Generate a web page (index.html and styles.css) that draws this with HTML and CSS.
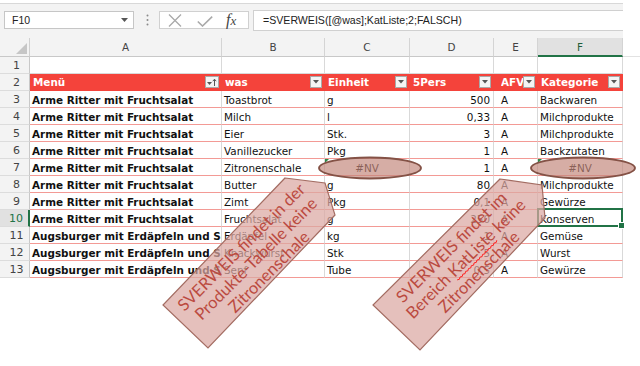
FILE: index.html
```html
<!DOCTYPE html>
<html lang="de">
<head>
<meta charset="utf-8">
<title>SVERWEIS</title>
<link rel="stylesheet" href="styles.css">
</head>
<body>
<div class="app">
  <div class="fbar">
    <div class="namebox"><span class="nb-text">F10</span><svg class="nb-arrow" width="7" height="4" viewBox="0 0 7 4"><polygon points="0,0 7,0 3.5,4" fill="#555"/></svg></div>
    <svg class="grip" width="3" height="12" viewBox="0 0 3 12"><circle cx="1.5" cy="1.5" r="1" fill="#8a8a8a"/><circle cx="1.5" cy="6" r="1" fill="#8a8a8a"/><circle cx="1.5" cy="10.5" r="1" fill="#8a8a8a"/></svg>
    <div class="btns">
      <svg class="ico-x" width="14" height="13" viewBox="0 0 14 13"><path d="M1 0.5 L13 12.5 M13 0.5 L1 12.5" stroke="#a9a9a9" stroke-width="1.3" fill="none"/></svg>
      <svg class="ico-ok" width="16" height="11" viewBox="0 0 16 11"><path d="M0.8 5.5 L5.5 10 L15.2 0.6" stroke="#a9a9a9" stroke-width="1.6" fill="none"/></svg>
      <span class="fx">f<span class="fx-x">x</span></span>
    </div>
    <div class="formula">=SVERWEIS([@was];KatListe;2;FALSCH)</div>
  </div>

  <div class="sheet">
    <div class="r hdr">
      <div class="corner"><svg width="11" height="11" viewBox="0 0 11 11"><polygon points="11,0 11,11 0,11" fill="#c6c6c6"/></svg></div>
      <div class="ch">A</div><div class="ch">B</div><div class="ch">C</div><div class="ch">D</div><div class="ch">E</div><div class="ch chsel">F</div><div class="ch chrest"></div>
    </div>

    <div class="r">
      <div class="rh">1</div><div class="c"></div><div class="c"></div><div class="c"></div><div class="c"></div><div class="c"></div><div class="c"></div><div class="x"></div>
    </div>

    <div class="r">
      <div class="rh">2</div>
      <div class="th"><span class="lbl">Menü</span><span class="fb fb-sort"><svg width="10" height="8" viewBox="0 0 10 8"><polygon points="0,4 5,4 2.5,7" fill="#555"/><path d="M7.5 8 V1.5 M5.8 3.2 L7.5 1.2 L9.2 3.2" stroke="#555" stroke-width="1" fill="none"/></svg></span></div>
      <div class="th"><span class="lbl">was</span><span class="fb"><svg width="6" height="4" viewBox="0 0 6 4"><polygon points="0,0 6,0 3,3.5" fill="#555"/></svg></span></div>
      <div class="th"><span class="lbl">Einheit</span><span class="fb"><svg width="6" height="4" viewBox="0 0 6 4"><polygon points="0,0 6,0 3,3.5" fill="#555"/></svg></span></div>
      <div class="th"><span class="lbl">5Pers</span><span class="fb"><svg width="6" height="4" viewBox="0 0 6 4"><polygon points="0,0 6,0 3,3.5" fill="#555"/></svg></span></div>
      <div class="th th-e"><span class="lbl">AFV</span><span class="fb"><svg width="6" height="4" viewBox="0 0 6 4"><polygon points="0,0 6,0 3,3.5" fill="#555"/></svg></span></div>
      <div class="th"><span class="lbl">Kategorie</span><span class="fb"><svg width="6" height="4" viewBox="0 0 6 4"><polygon points="0,0 6,0 3,3.5" fill="#555"/></svg></span></div>
      <div class="x"></div>
    </div>

    <div class="r t"><div class="rh">3</div><div class="c a">Arme Ritter mit Fruchtsalat</div><div class="c">Toastbrot</div><div class="c">g</div><div class="c n">500</div><div class="c e">A</div><div class="c">Backwaren</div><div class="x"></div></div>
    <div class="r t"><div class="rh">4</div><div class="c a">Arme Ritter mit Fruchtsalat</div><div class="c">Milch</div><div class="c">l</div><div class="c n">0,33</div><div class="c e">A</div><div class="c">Milchprodukte</div><div class="x"></div></div>
    <div class="r t"><div class="rh">5</div><div class="c a">Arme Ritter mit Fruchtsalat</div><div class="c">Eier</div><div class="c">Stk.</div><div class="c n">3</div><div class="c e">A</div><div class="c">Milchprodukte</div><div class="x"></div></div>
    <div class="r t"><div class="rh">6</div><div class="c a">Arme Ritter mit Fruchtsalat</div><div class="c">Vanillezucker</div><div class="c">Pkg</div><div class="c n">1</div><div class="c e">A</div><div class="c">Backzutaten</div><div class="x"></div></div>
    <div class="r t"><div class="rh">7</div><div class="c a">Arme Ritter mit Fruchtsalat</div><div class="c">Zitronenschale</div><div class="c err">#NV</div><div class="c n">1</div><div class="c e">A</div><div class="c err">#NV</div><div class="x"></div></div>
    <div class="r t"><div class="rh">8</div><div class="c a">Arme Ritter mit Fruchtsalat</div><div class="c">Butter</div><div class="c">g</div><div class="c n">80</div><div class="c e">A</div><div class="c">Milchprodukte</div><div class="x"></div></div>
    <div class="r t"><div class="rh">9</div><div class="c a">Arme Ritter mit Fruchtsalat</div><div class="c">Zimt</div><div class="c">Pkg</div><div class="c n">0,1</div><div class="c e">A</div><div class="c">Gewürze</div><div class="x"></div></div>
    <div class="r t"><div class="rh rhsel">10</div><div class="c a">Arme Ritter mit Fruchtsalat</div><div class="c">Fruchtsalat</div><div class="c">g</div><div class="c n">250</div><div class="c e">A</div><div class="c sel">Konserven</div><div class="x"></div></div>
    <div class="r t"><div class="rh">11</div><div class="c a">Augsburger mit Erdäpfeln und Sauerkraut</div><div class="c">Erdäpfel</div><div class="c">kg</div><div class="c n">1</div><div class="c e">A</div><div class="c">Gemüse</div><div class="x"></div></div>
    <div class="r t"><div class="rh">12</div><div class="c a">Augsburger mit Erdäpfeln und Sauerkraut</div><div class="c">Knackwurst</div><div class="c">Stk</div><div class="c n">5</div><div class="c e">A</div><div class="c">Wurst</div><div class="x"></div></div>
    <div class="r t"><div class="rh">13</div><div class="c a">Augsburger mit Erdäpfeln und Sauerkraut</div><div class="c">Senf</div><div class="c">Tube</div><div class="c n">0,5</div><div class="c e">A</div><div class="c">Gewürze</div><div class="x"></div></div>
  </div>

  <svg class="overlay" width="640" height="366" viewBox="0 0 640 366">
    <ellipse class="oval" cx="370" cy="168" rx="51" ry="10.5"/>
    <ellipse class="oval" cx="583" cy="168" rx="52" ry="10.5"/>

    <polygon class="callout" points="285,178 325,183 335,215 208,348 163,305"/>
    <g class="ctext" transform="translate(256,259) rotate(-45)">
      <text x="-2" y="-13">SVERWEIS findet in der</text>
      <text x="0" y="5.5">Produkte-Tabelle keine</text>
      <text x="0" y="24">Zitronenschale</text>
    </g>

    <polygon class="callout" points="500,179 542,185 545,218 420,350 373,305"/>
    <g class="ctext" transform="translate(466,259) rotate(-45)">
      <text x="-2" y="-13">SVERWEIS findet im</text>
      <text x="0" y="5.5">Bereich KatListe keine</text>
      <text x="0" y="24">Zitronenschale</text>
      <path class="squiggle" d="M-21 8.5 l2 1.2 l2 -1.2 l2 1.2 l2 -1.2 l2 1.2 l2 -1.2 l2 1.2 l2 -1.2 l2 1.2 l2 -1.2 l2 1.2 l2 -1.2 l2 1.2 l2 -1.2 l2 1.2 l2 -1.2 l2 1.2 l2 -1.2 l2 1.2 l2 -1.2 l2 1.2 l2 -1.2 l2 1.2 l2 -1.2 l2 1.2 l2 -1.2 l2 1.2 l2 -1.2"/>
    </g>
  </svg>
</div>
</body>
</html>
```

FILE: styles.css
```css
html, body {
  margin: 0;
  padding: 0;
  background: #fff;
}

.app {
  position: relative;
  width: 640px;
  height: 366px;
  overflow: hidden;
  background: #fff;
}

/* ---------- formula bar ---------- */
.fbar {
  height: 35px;
  margin-top: 3px;
  box-sizing: border-box;
  border-top: 1px solid #d8d8d8;
  background: #f3f3f3;
  width: 623px;
  display: flex;
  align-items: flex-start;
  padding: 7px 0 0 4px;
}

.namebox {
  width: 130px;
  height: 18px;
  box-sizing: border-box;
  border: 1px solid #c6c6c6;
  background: #fff;
  display: flex;
  align-items: center;
  justify-content: space-between;
  padding: 0 5px 0 7px;
}

.nb-text {
  font: 10.5px "Liberation Sans", Arial, sans-serif;
  color: #222;
}

.grip {
  margin: 3px 0 0 12px;
}

.btns {
  margin-left: 10px;
  width: 90px;
  height: 18px;
  box-sizing: border-box;
  border: 1px solid #d0d0d0;
  background: #fff;
  display: flex;
  align-items: center;
  padding-left: 8px;
}

.ico-x { margin-top: 1px; }
.ico-ok { margin-left: 15px; margin-top: 3px; }

.fx {
  margin-left: 13px;
  font: italic 16px "Liberation Serif", "Times New Roman", serif;
  color: #444;
  line-height: 16px;
}

.fx-x {
  font-size: 13px;
}

.formula {
  margin-left: 4px;
  margin-top: -1px;
  flex: 1;
  height: 21px;
  box-sizing: border-box;
  border: 1px solid #d0d0d0;
  border-right: none;
  background: #fff;
  padding: 3px 0 0 9px;
  font: 10.6px "Liberation Sans", Arial, sans-serif;
  color: #222;
}

/* ---------- sheet ---------- */
.sheet {
  font-family: "DejaVu Sans", Verdana, sans-serif;
  font-size: 10.4px;
}

.r {
  display: grid;
  grid-template-columns: 30px 192px 103px 85px 84px 44px 85px 17px;
  grid-template-rows: 17px;
}

.r.hdr {
  grid-template-rows: 19px;
}

.corner {
  box-sizing: border-box;
  background: #f3f3f3;
  border-right: 1px solid #d0d0d0;
  border-bottom: 1px solid #c8c8c8;
  display: flex;
  align-items: flex-end;
  justify-content: flex-end;
  padding: 0 2px 2px 0;
}

.ch {
  box-sizing: border-box;
  background: #f3f3f3;
  border-right: 1px solid #d4d4d4;
  border-bottom: 1px solid #c8c8c8;
  color: #444;
  text-align: center;
  line-height: 18px;
}

.chsel {
  background: #e1e1e1;
  color: #1e5e3a;
  border-bottom: 2px solid #217346;
}

.chrest {
  background: #fff;
  border-right: none;
  border-bottom: 1px solid #e2e2e2;
}

.rh {
  box-sizing: border-box;
  background: #f3f3f3;
  border-right: 1px solid #c8c8c8;
  border-bottom: 1px solid #dcdcdc;
  color: #444;
  text-align: center;
  padding: 2px 0 0 4px;
  line-height: 14px;
  font-size: 11px;
}

.rhsel {
  background: #e1e1e1;
  color: #217346;
  border-right: 2px solid #217346;
}

.c {
  position: relative;
  box-sizing: border-box;
  border-right: 1px solid #d9d9d9;
  border-bottom: 1px solid #d9d9d9;
  padding: 2px 2px 0 2px;
  line-height: 14px;
  white-space: nowrap;
  overflow: hidden;
  color: #111;
}

.x {
  background: #fff;
}

.t .c {
  border-bottom-color: #f39a95;
}

.c.a {
  font-weight: bold;
  padding-left: 2px;
  text-overflow: clip;
}

.c.n {
  text-align: right;
  padding-right: 3px;
}

.c.e {
  padding-left: 7px;
}

.c.err {
  text-align: center;
  overflow: visible;
}

.c.err::before {
  content: "";
  position: absolute;
  left: 0;
  top: 0;
  border-top: 4px solid #2f8a4a;
  border-right: 4px solid transparent;
}

.c.sel {
  overflow: visible;
}

.c.sel::after {
  content: "";
  position: absolute;
  left: -1px;
  top: -2px;
  right: -1px;
  bottom: -1px;
  border: 2px solid #217346;
}

.c.sel::before {
  content: "";
  position: absolute;
  right: -3px;
  bottom: -3px;
  width: 5px;
  height: 5px;
  background: #217346;
  border: 1px solid #fff;
  z-index: 1;
}

/* table header row */
.th {
  box-sizing: border-box;
  background: #f4433b;
  display: flex;
  align-items: center;
  padding-left: 3px;
  padding-right: 1px;
  border-bottom: 1px solid #f4433b;
  color: #fff;
  font-weight: bold;
  white-space: nowrap;
  overflow: hidden;
}

.th-e {
  padding-left: 7px;
}

.lbl {
  flex: 1;
  overflow: hidden;
}

.fb {
  flex: none;
  width: 12px;
  height: 12px;
  box-sizing: border-box;
  border: 1px solid #a9a9a9;
  background: #f4f4f4;
  display: flex;
  align-items: center;
  justify-content: center;
  margin-right: 2px;
}

.fb-sort {
  width: 14px;
}

/* ---------- overlay shapes ---------- */
.overlay {
  position: absolute;
  left: 0;
  top: 0;
  pointer-events: none;
}

.oval {
  fill: rgba(194, 134, 122, 0.68);
  stroke: #845246;
  stroke-width: 1.8;
}

.callout {
  fill: rgba(219, 168, 162, 0.72);
  stroke: #a36c62;
  stroke-width: 1.2;
}

.ctext text {
  font-family: Lato, "Open Sans", sans-serif;
  font-size: 16.5px;
  fill: #bb4a40;
  text-anchor: middle;
}

.squiggle {
  fill: none;
  stroke: #ff1a1a;
  stroke-width: 0.9;
}
```
